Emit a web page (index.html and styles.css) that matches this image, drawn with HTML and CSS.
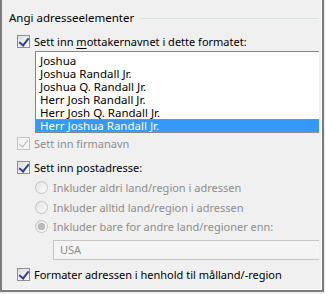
FILE: index.html
```html
<!DOCTYPE html>
<html lang="nb">
<head>
  <meta charset="UTF-8">
  <meta name="viewport" content="width=device-width, initial-scale=1.0">
  <title>Angi adresseelementer</title>
  <link rel="stylesheet" href="styles.css">
</head>
<body>
  <div class="frame">
    <div class="group">
      <div class="legend">
        <span class="legend-text">Angi adresseelementer</span>
        <span class="legend-line"></span>
      </div>

      <div class="row check-row name">
        <i class="check on"></i>
        <span class="label">Sett inn <u>m</u>ottakernavnet i dette formatet:</span>
      </div>

      <ul class="listbox">
        <li>Joshua</li>
        <li>Joshua Randall Jr.</li>
        <li>Joshua Q. Randall Jr.</li>
        <li>Herr Josh Randall Jr.</li>
        <li>Herr Josh Q. Randall Jr.</li>
        <li class="selected">Herr Joshua Randall Jr.</li>
      </ul>

      <div class="row check-row firm">
        <i class="check on disabled"></i>
        <span class="label disabled">Sett inn firmanavn</span>
      </div>

      <div class="row check-row post">
        <i class="check on"></i>
        <span class="label">Sett inn postadresse:</span>
      </div>

      <div class="radios">
        <div class="row radio-row">
          <i class="radio"></i>
          <span class="label disabled">Inkluder aldri land/region i adressen</span>
        </div>
        <div class="row radio-row">
          <i class="radio"></i>
          <span class="label disabled">Inkluder alltid land/region i adressen</span>
        </div>
        <div class="row radio-row">
          <i class="radio selected"></i>
          <span class="label disabled">Inkluder bare for andre land/regioner enn:</span>
        </div>
      </div>

      <div class="combo">USA</div>

      <div class="row check-row last">
        <i class="check on"></i>
        <span class="label">Formater adressen i henhold til målland/-region</span>
      </div>
    </div>
  </div>
</body>
</html>
```

FILE: styles.css
```css
* {
  box-sizing: border-box;
}
html,
body {
  margin: 0;
  padding: 0;
  background-color: #f0f0f0;
}
body {
  font-family: "Noto Sans", "Open Sans", sans-serif;
  font-size: 11px;
  color: #000;
}
.frame {
  width: 324px;
  height: 292px;
  border: 2px solid #7c7c7c;
  border-top: 0;
  background-color: #f0f0f0;
}
.group {
  height: 100%;
  padding: 7px 2px 0 0;
  border-right: 1px solid #fff;
  border-bottom: 1px solid #fff;
}
.legend {
  display: flex;
  align-items: center;
  height: 20px;
  padding-left: 7px;
  font-size: 11.5px;
}
.legend-line {
  flex: 1;
  height: 1px;
  margin-left: 6px;
  margin-top: 2px;
  background-color: #d5e0e2;
}
.row {
  display: flex;
  align-items: center;
  height: 20px;
}
.check-row {
  padding-left: 15px;
}
.check-row .label {
  margin-left: 4px;
}
.name {
  margin-top: 4px;
}
.post {
  margin-top: 4px;
}
.radios {
  margin-top: 1px;
}
.radio-row {
  height: 19.5px;
  padding-left: 33px;
}
.radio-row .label {
  margin-left: 5px;
}
.label.disabled {
  color: #8d8d8d;
}
.label u {
  text-decoration: underline;
  text-underline-offset: 2px;
}

/* 复选框 */
.check {
  display: inline-block;
  position: relative;
  width: 13px;
  height: 13px;
  border: 1px solid #8e8f8f;
  background: linear-gradient(135deg, #dcdcdc, #fdfdfd);
  flex: none;
}
.check::after {
  content: "";
  position: absolute;
  left: 3px;
  top: 0px;
  width: 4px;
  height: 8px;
  border-right: 2px solid #2d3f9b;
  border-bottom: 2px solid #2d3f9b;
  transform: rotate(38deg);
}
.check.disabled {
  border-color: #c4c4c4;
  background: #f4f4f4;
}
.check.disabled::after {
  border-color: #b0b0b0;
  border-right-width: 1.5px;
  border-bottom-width: 1.5px;
}

/* 单选框 */
.radio {
  display: inline-block;
  position: relative;
  width: 13px;
  height: 13px;
  border: 1px solid #c4c4c4;
  border-radius: 50%;
  background: linear-gradient(135deg, #e4e4e4, #fafafa);
  flex: none;
}
.radio.selected::after {
  content: "";
  position: absolute;
  left: 2px;
  top: 2px;
  width: 7px;
  height: 7px;
  border-radius: 50%;
  background: radial-gradient(circle, #bdbdbd 40%, #9a9a9a 100%);
}

/* 列表 */
.listbox {
  list-style: none;
  margin: 0 0 0 33px;
  padding: 2px 0 0 0;
  height: 82px;
  background-color: #fff;
  border-top: 1px solid #828790;
  border-left: 1px solid #828790;
  border-bottom: 1px solid #828790;
  font-size: 11.5px;
}
.listbox li {
  height: 13px;
  line-height: 13px;
  padding-left: 4px;
  white-space: nowrap;
}
.listbox .selected {
  color: #fff;
  background-color: #3399ff;
  border-top: 1px dotted #e0861f;
  border-bottom: 1px dotted #e0861f;
  line-height: 11px;
}

.combo {
  height: 20px;
  margin: 3.5px 0 0 51px;
  padding-left: 6px;
  line-height: 18px;
  color: #8d8d8d;
  border: 1px solid #c6c6c6;
  border-right: 0;
  background-color: #f4f4f4;
}
.last {
  margin-top: 4px;
}
```
